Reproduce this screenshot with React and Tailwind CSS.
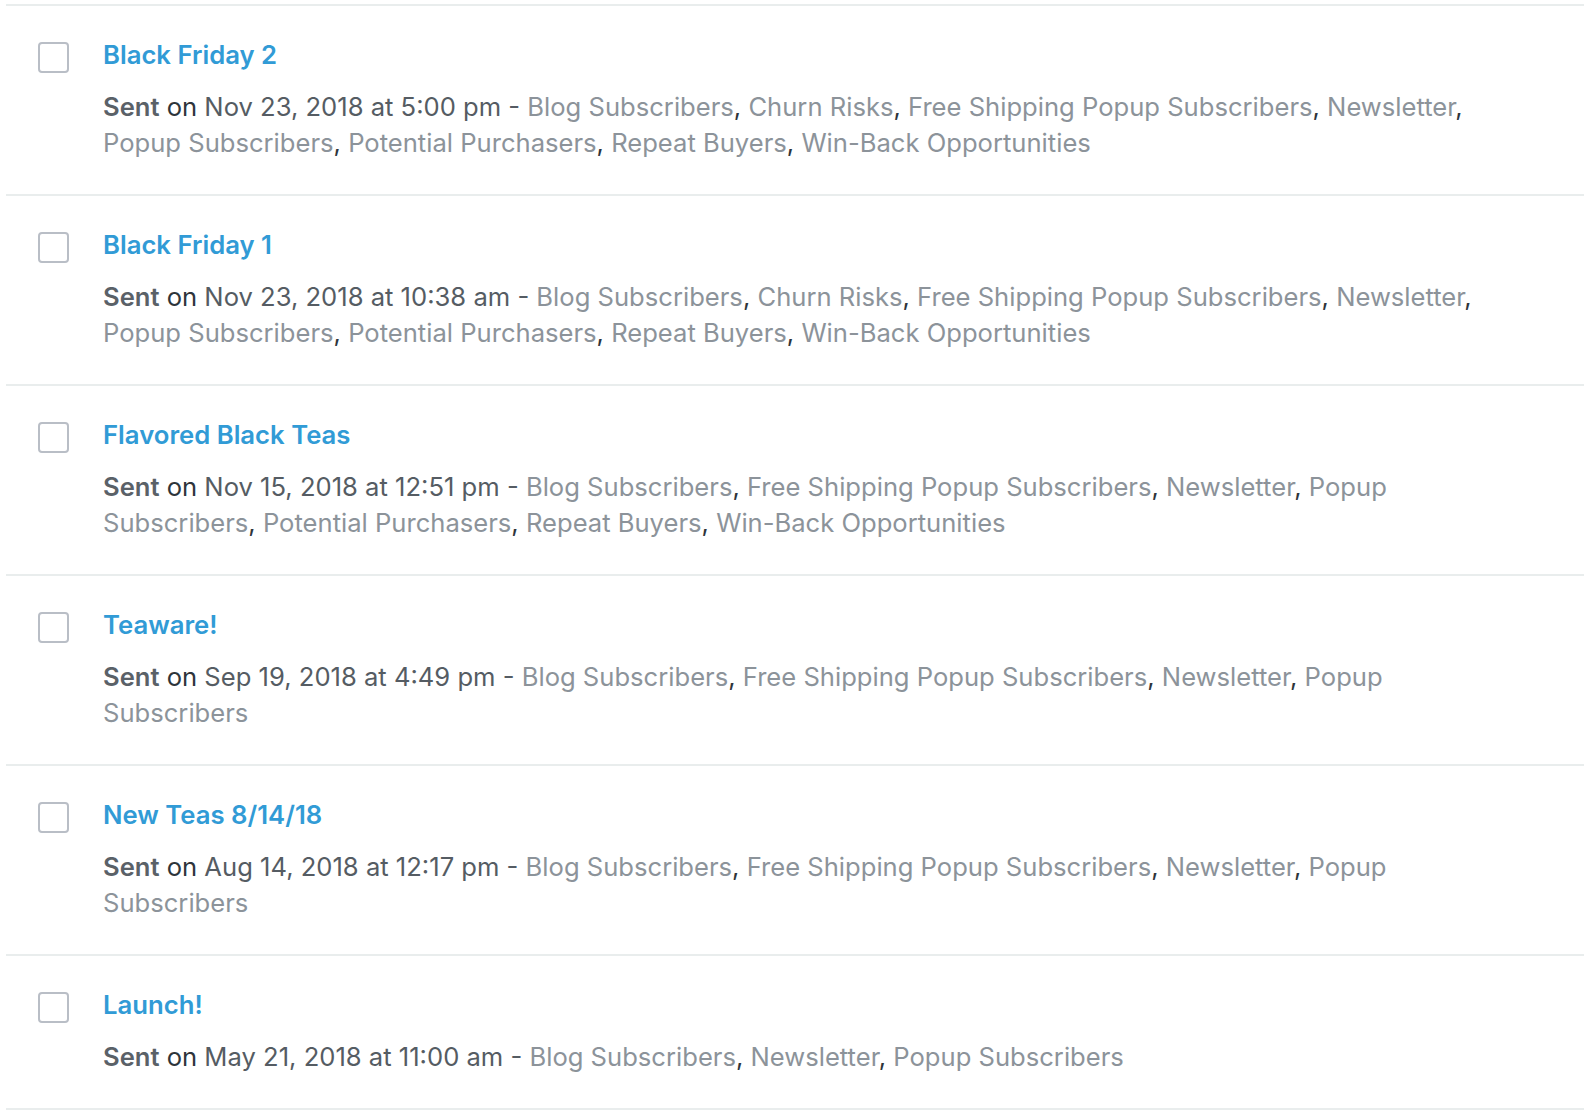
import React from "react";

const ALL = ["Blog Subscribers", "Churn Risks", "Free Shipping Popup Subscribers", "Newsletter", "Popup Subscribers", "Potential Purchasers", "Repeat Buyers", "Win-Back Opportunities"];
const NOCHURN = ["Blog Subscribers", "Free Shipping Popup Subscribers", "Newsletter", "Popup Subscribers", "Potential Purchasers", "Repeat Buyers", "Win-Back Opportunities"];
const FOUR = ["Blog Subscribers", "Free Shipping Popup Subscribers", "Newsletter", "Popup Subscribers"];

const rows = [
  { title: "Black Friday 2", date: "Nov 23, 2018 at 5:00 pm", lists: ALL },
  { title: "Black Friday 1", date: "Nov 23, 2018 at 10:38 am", lists: ALL },
  { title: "Flavored Black Teas", date: "Nov 15, 2018 at 12:51 pm", lists: NOCHURN },
  { title: "Teaware!", date: "Sep 19, 2018 at 4:49 pm", lists: FOUR },
  { title: "New Teas 8/14/18", date: "Aug 14, 2018 at 12:17 pm", lists: FOUR },
  { title: "Launch!", date: "May 21, 2018 at 11:00 am", lists: ["Blog Subscribers", "Newsletter", "Popup Subscribers"] },
];

function Row({ r, last }) {
  return (
    <div className={"flex items-start border-t-2 border-[#e9eded] pl-[32px] pr-[78px] pt-[31px] pb-[33px]" + (last ? " border-b-2" : "")}>
      <div className="mt-[5px] w-[31px] h-[31px] shrink-0 rounded-[4px] border-2 border-[#b9bec6] bg-white" />
      <div className="ml-[34px] flex-1">
        <div className="text-[25.7px] leading-[36px] font-semibold text-[#319bd6]">{r.title}</div>
        <div className="mt-[16px] text-[25.6px] leading-[36px] text-[#2e353b]">
          <span className="font-semibold text-[#5a6168]">Sent</span> on{" "}
          <span className="text-[#555c63]">{r.date} - </span>
          {r.lists.map((l, i) => (
            <React.Fragment key={l}>
              <span className="text-[#8c939a]">{l}</span>
              {i < r.lists.length - 1 ? ", " : ""}
            </React.Fragment>
          ))}
        </div>
      </div>
    </div>
  );
}

export default function App() {
  return (
    <div className="w-[1584px] min-h-[1112px] bg-white pt-[4px] font-['Inter',sans-serif]">
      <div className="ml-[6px]">
        {rows.map((r, i) => (
          <Row key={r.title} r={r} last={i === rows.length - 1} />
        ))}
      </div>
    </div>
  );
}
